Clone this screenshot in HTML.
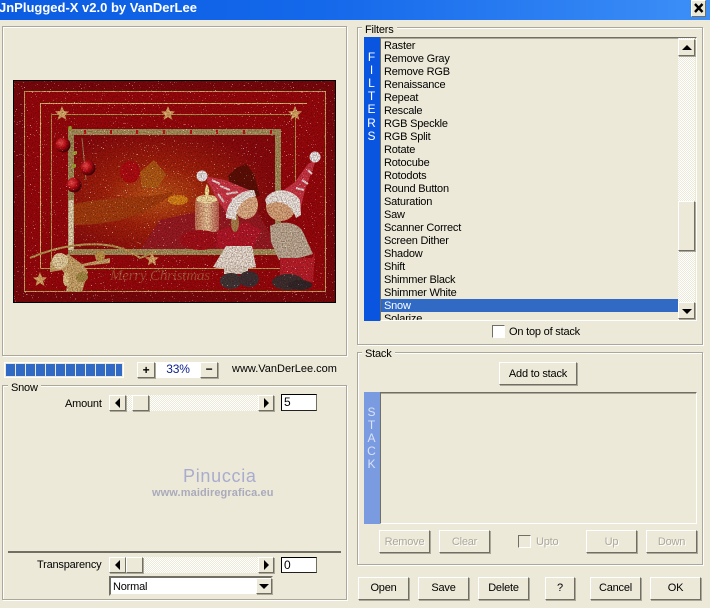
<!DOCTYPE html>
<html><head><meta charset="utf-8"><style>
html,body{margin:0;padding:0;background:#ece9d8;}
#w{position:relative;width:710px;height:608px;overflow:hidden;background:#ece9d8;font-family:"Liberation Sans",sans-serif;font-size:11px;color:#000;letter-spacing:-.2px;}
#w div,#w svg{position:absolute;box-sizing:border-box;}
.t{white-space:nowrap;line-height:13px;}
.box{border:1px solid #aca899;box-shadow:inset 1px 1px 0 #fff,1px 1px 0 #fff;}
.lg{background:#ece9d8;padding:0 3px;height:13px;line-height:13px;white-space:nowrap;}
.b{background:#ece9d8;border:1px solid;border-color:#fff #716f64 #716f64 #fff;box-shadow:1px 1px 0 #aca899;text-align:center;white-space:nowrap;}
.b.dis{color:#aca899;text-shadow:1px 1px 0 #fff;}
.dith{background:repeating-conic-gradient(#fff 0 25%,#ece9d8 0 50%) 0 0/2px 2px;}
.sunk{border:1px solid;border-color:#716f64 #fff #fff #716f64;}
.inp{background:#fff;border:1px solid;border-color:#000 #000 #000 #000;border-right-color:#716f64;border-bottom-color:#222;}
.tu{width:0;height:0;border-left:5px solid transparent;border-right:5px solid transparent;border-bottom:5px solid #000;}
.td{width:0;height:0;border-left:5px solid transparent;border-right:5px solid transparent;border-top:5px solid #000;}
.tl{width:0;height:0;border-top:5px solid transparent;border-bottom:5px solid transparent;border-right:5px solid #000;}
.tr{width:0;height:0;border-top:5px solid transparent;border-bottom:5px solid transparent;border-left:5px solid #000;}
.v{color:#fff;font-size:12px;width:15px;text-align:center;line-height:13px;letter-spacing:0;}
.p{width:9px;height:12px;top:364px;background:#316ac5;}
</style></head><body><div id="w">

<div style="left:0;top:0;width:710px;height:20px;background:linear-gradient(90deg,#0b5ce2 0%,#1468ea 45%,#3d8ff7 100%);"></div>
<div class="t" style="left:-1px;top:0;height:16px;line-height:16px;color:#fff;font-weight:bold;font-size:13px;letter-spacing:0;">JnPlugged-X v2.0 by VanDerLee</div>
<div class="b" style="left:691px;top:0;width:15px;height:17px;box-shadow:none;"></div>
<svg style="left:693px;top:2px" width="12" height="12" viewBox="0 0 12 12"><path d="M2 2L9.500 10M9.500 2L2 10" stroke="#000" stroke-width="2.4"/></svg>

<div class="box" style="left:2px;top:26px;width:345px;height:330px;"></div>

<svg style="left:13px;top:80px" width="323" height="223" viewBox="13 80 323 223">
<defs>
<filter id="snow" x="0" y="0" width="100%" height="100%" color-interpolation-filters="sRGB"><feTurbulence type="fractalNoise" baseFrequency="0.95" numOctaves="1" seed="7"/><feColorMatrix values="0 0 0 0 1 0 0 0 0 1 0 0 0 0 1 0 0 1 0 0"/><feComponentTransfer><feFuncA type="linear" slope="40" intercept="-29"/></feComponentTransfer></filter>
<filter id="gr" x="0" y="0" width="100%" height="100%" color-interpolation-filters="sRGB"><feTurbulence type="fractalNoise" baseFrequency="0.8" numOctaves="2" seed="3"/><feColorMatrix values="0 0 0 0 .2 0 0 0 0 0 0 0 0 0 0 0 0 0 1.8 -.6"/></filter>
<radialGradient id="glow" cx=".42" cy=".55" r=".55"><stop offset="0" stop-color="#c8601a"/><stop offset=".45" stop-color="#a8240c"/><stop offset="1" stop-color="#8c0a0e"/></radialGradient>
<linearGradient id="cand" x1="0" x2="1"><stop offset="0" stop-color="#c87a5a"/><stop offset=".5" stop-color="#f3d2a2"/><stop offset="1" stop-color="#c06050"/></linearGradient>
<radialGradient id="ball" cx=".35" cy=".35" r=".7"><stop offset="0" stop-color="#ff5a5a"/><stop offset=".5" stop-color="#c00c14"/><stop offset="1" stop-color="#300006"/></radialGradient>
</defs>
<rect x="13" y="80" width="323" height="223" fill="#9c080c"/>
<rect x="13" y="80" width="11" height="223" fill="#7c080c"/><rect x="326" y="80" width="10" height="223" fill="#7c080c"/>
<rect x="13" y="80" width="323" height="11" fill="#7c080c"/><rect x="13" y="292" width="323" height="11" fill="#7c080c"/>
<rect x="68" y="128" width="213" height="125" fill="url(#glow)"/>
<path d="M160 220L250 200L280 250H140Z" fill="#9c1c24"/>
<path d="M70 205C110 195 150 200 176 190C150 215 115 225 75 225Z" fill="#a8400f"/>
<path d="M140 172l14-12 12 14-8 14-16 0Z" fill="#b86a18" opacity=".8"/>
<ellipse cx="130" cy="172" rx="10" ry="11" fill="#b50c12"/>
<path d="M236 168l-8 8 6 24 26-4-6-22-8-10Z" fill="#5c1006"/>
<ellipse cx="178" cy="200" rx="10" ry="5" fill="#e08a18"/>
<rect x="24.500" y="91.500" width="301" height="200" fill="none" stroke="#cdb06a"/>
<path d="M40.500 268.500V103.500H307" fill="none" stroke="#e0c878"/>
<path d="M40.500 268.500H283" fill="none" stroke="#c4b060"/>
<path d="M51.500 114.500H295.500V192M51.500 114.500V270" fill="none" stroke="#b8a050"/>
<path d="M71 132H278V252H71Z" fill="none" stroke="#a89a60" stroke-width="6"/>
<path d="M71 200V250" stroke="#ece0bc" stroke-width="5"/>
<path d="M84 132h2M110 132h2M136 132h2M163 132h2M190 132h2M216 132h2M243 132h2M270 132h2" stroke="#c81418" stroke-width="4"/>
<path d="M30 258C60 245 110 235 140 258L155 252" stroke="#c0a458" stroke-width="2" fill="none"/>
<g fill="#e0b46c"><path d="M62 106l2 5 5 .5-4 3.500 1.500 5-4.500-3-4.500 3 1.500-5-4-3.500 5-.5Z"/><path d="M168 106l2 5 5 .5-4 3.500 1.500 5-4.500-3-4.500 3 1.500-5-4-3.500 5-.5Z"/><path d="M295 106l2 5 5 .5-4 3.500 1.500 5-4.500-3-4.500 3 1.500-5-4-3.500 5-.5Z"/><path d="M40 272l2 5 5 .5-4 3.500 1.500 5-4.500-3-4.500 3 1.500-5-4-3.500 5-.5Z"/><path d="M152 252l2 5 5 .5-4 3 1 5-4-3-4 3 1-5-4-3 5-.5Z"/></g>
<path d="M50 262l18-8 14 10 28-6 0 5-26 3 4 6-6 20-16 0 2-14-6-8-12 2Z" fill="#d0b070"/>
<circle cx="60" cy="261" r="8" fill="#ecdca8"/>
<ellipse cx="82" cy="277" rx="6" ry="5" fill="#a89448"/>
<ellipse cx="66" cy="279" rx="3" ry="7" fill="#e8d090"/>
<circle cx="100" cy="256" r="5" fill="#c4a050"/>
<path d="M72 130V200M82 138L86 180" stroke="#a88e5a" fill="none"/>
<circle cx="63" cy="145" r="7.500" fill="url(#ball)"/><circle cx="88" cy="168" r="7.500" fill="url(#ball)"/><circle cx="74" cy="185" r="7.500" fill="url(#ball)"/>
<circle cx="70" cy="128" r="2" fill="#a0b030"/><circle cx="75" cy="153" r="2" fill="#a0b030"/><circle cx="74" cy="166" r="2" fill="#a0b030"/>
<text x="110" y="280" font-family="Liberation Serif,serif" font-style="italic" font-size="15" fill="#b89c58" opacity=".55">Merry Christmas</text>

<rect x="195" y="198" width="24" height="34" rx="4" fill="url(#cand)"/>
<ellipse cx="207" cy="199" rx="11" ry="4" fill="#fbe9a8"/>
<path d="M207 184c3 6 3 10 0 14c-3-4-3-8 0-14Z" fill="#fff2a0"/>
<ellipse cx="200" cy="240" rx="20" ry="10" fill="#a8101a"/>

<path d="M217 231l30-9 14 8-8 19-36 0Z" fill="#b8182a"/>
<ellipse cx="235" cy="223" rx="4" ry="9" fill="#b08a50"/>
<path d="M226 246h26l4 21c-14 3-30 3-43 0Z" fill="#f0eadc"/>
<rect x="224" y="266" width="24" height="8" fill="#e6dece"/>
<ellipse cx="231" cy="281" rx="11" ry="8" fill="#3e3a3a"/><ellipse cx="249" cy="279" rx="10" ry="8" fill="#3a3438"/>
<ellipse cx="246" cy="205" rx="12" ry="14" fill="#e7b98c"/>
<path d="M205 176L225 180 254 192 227 214 215 196Z" fill="#d43a4a"/>
<path d="M212 180l8 4M220 186l10 4M226 194l12-2M218 194l6 8M232 198l6 6" stroke="#f4e8e4" stroke-width="2" fill="none"/>
<path d="M226 218C226 202 238 190 254 190L256 196C244 198 236 206 236 220Z" fill="#f6f3ec"/>
<circle cx="202" cy="176" r="5.500" fill="#f4f4f4"/>

<ellipse cx="281" cy="206" rx="15" ry="15" fill="#dfae80"/>
<path d="M316 160L308 164 295 182 281 192 300 211 305 190Z" fill="#d43a4a"/>
<path d="M308 170l4 4M302 180l6 4M296 188l8 2M290 194l8 6" stroke="#f4e8e4" stroke-width="2" fill="none"/>
<path d="M265 200C270 188 290 186 300 200L301 215L296 218C292 204 278 198 267 205Z" fill="#f6f3ec"/>
<circle cx="315" cy="157" r="5.500" fill="#f4f4f4"/>
<path d="M270 226c12-6 28-4 33 6l10 22-14 4-2 2h-18l-8-18Z" fill="#c4b69e"/>
<path d="M280 258h32l3-6-2 30-24 0-9-6Z" fill="#c0202c"/>
<ellipse cx="288" cy="282" rx="16" ry="8" fill="#3a3232"/><ellipse cx="300" cy="285" rx="12" ry="5" fill="#2e2a2c"/>

<rect x="13" y="80" width="323" height="223" filter="url(#gr)" opacity=".55"/>
<rect x="13" y="80" width="323" height="223" filter="url(#snow)"/>
<rect x="13.500" y="80.500" width="322" height="222" fill="none" stroke="#000"/>
</svg>

<div style="left:4px;top:362px;width:120px;height:16px;background:#fff;"></div>
<div style="left:5px;top:363px;width:118px;height:14px;background:#ece9d8;"></div>
<div class="p" style="left:6px"></div><div class="p" style="left:16px"></div><div class="p" style="left:26px"></div><div class="p" style="left:36px"></div><div class="p" style="left:46px"></div><div class="p" style="left:56px"></div><div class="p" style="left:66px"></div><div class="p" style="left:76px"></div><div class="p" style="left:86px"></div><div class="p" style="left:96px"></div><div class="p" style="left:106px"></div><div class="p" style="left:116px;width:6px"></div>

<div style="left:155px;top:362px;width:46px;height:16px;background:#fff;"></div>
<div class="b" style="left:137px;top:362px;width:18px;height:16px;font-weight:bold;font-size:12px;line-height:14px;">+</div>
<div class="b" style="left:200px;top:362px;width:18px;height:16px;font-weight:bold;font-size:12px;line-height:13px;">−</div>
<div class="t" style="left:155px;width:46px;text-align:center;top:363px;color:#0a1f8a;font-size:12px;letter-spacing:-.2px;">33%</div>
<div class="t" style="left:232px;top:363px;font-size:11px;letter-spacing:0;">www.VanDerLee.com</div>

<div class="box" style="left:2px;top:385px;width:345px;height:215px;"></div>
<div class="lg" style="left:8px;top:382px;">Snow</div>
<div class="t" style="left:65px;top:398px;">Amount</div>
<div class="dith" style="left:126px;top:395px;width:132px;height:16px;"></div>
<div class="b" style="left:109px;top:395px;width:17px;height:16px;"><div class="tl" style="left:5px;top:2px;"></div></div>
<div class="b" style="left:132px;top:395px;width:17px;height:16px;"></div>
<div class="b" style="left:258px;top:395px;width:16px;height:16px;"><div class="tr" style="left:5px;top:2px;"></div></div>
<div class="inp t" style="left:281px;top:394px;width:36px;height:17px;padding-left:2px;font-size:12px;line-height:15px;">5</div>

<div class="t" style="left:183px;top:466px;height:20px;line-height:20px;font-size:18px;color:#a9acce;letter-spacing:.7px;">Pinuccia</div>
<div class="t" style="left:152px;top:487px;font-size:11px;font-weight:bold;color:#aaaabb;letter-spacing:.1px;">www.maidiregrafica.eu</div>

<div style="left:8px;top:551px;width:333px;height:2px;background:#716f64;"></div>
<div class="t" style="left:37px;top:559px;">Transparency</div>
<div class="dith" style="left:126px;top:557px;width:132px;height:16px;"></div>
<div class="b" style="left:109px;top:557px;width:17px;height:16px;"><div class="tl" style="left:5px;top:2px;"></div></div>
<div class="b" style="left:126px;top:557px;width:17px;height:16px;"></div>
<div class="b" style="left:258px;top:557px;width:16px;height:16px;"><div class="tr" style="left:5px;top:2px;"></div></div>
<div class="inp t" style="left:281px;top:557px;width:36px;height:16px;padding-left:2px;font-size:12px;line-height:14px;">0</div>
<div style="left:109px;top:576px;width:164px;height:20px;background:#fff;border:2px solid;border-color:#716f64 #ece9d8 #ece9d8 #716f64;"></div>
<div class="t" style="left:113px;top:581px;">Normal</div>
<div class="b" style="left:256px;top:578px;width:16px;height:16px;"><div class="td" style="left:2px;top:5px;"></div></div>

<div class="box" style="left:357px;top:27px;width:346px;height:318px;"></div>
<div class="lg" style="left:362px;top:24px;">Filters</div>
<div style="left:364px;top:37px;width:16px;height:284px;background:#0a55e0;"></div>
<div class="v" style="left:364px;top:51px;">F</div><div class="v" style="left:364px;top:64px;">I</div><div class="v" style="left:364px;top:77px;">L</div><div class="v" style="left:364px;top:90px;">T</div><div class="v" style="left:364px;top:103px;">E</div><div class="v" style="left:364px;top:117px;">R</div><div class="v" style="left:364px;top:130px;">S</div>

<div style="left:380px;top:37px;width:317px;height:284px;overflow:hidden;border:1px solid;border-color:#716f64 #fff #fff #716f64;box-shadow:inset 0 1px 0 #aca899;">
<div style="left:0;top:261px;width:297px;height:13px;background:#316ac5;"></div>
<div class="t" style="left:3px;top:2px;">Raster<br>Remove Gray<br>Remove RGB<br>Renaissance<br>Repeat<br>Rescale<br>RGB Speckle<br>RGB Split<br>Rotate<br>Rotocube<br>Rotodots<br>Round Button<br>Saturation<br>Saw<br>Scanner Correct<br>Screen Dither<br>Shadow<br>Shift<br>Shimmer Black<br>Shimmer White<br><span style="color:#fff">Snow</span><br>Solarize</div>
<div class="dith" style="left:297px;top:0;width:17px;height:282px;"></div>
<div class="b" style="left:297px;top:1px;width:17px;height:17px;"><div class="tu" style="left:3px;top:5px;"></div></div>
<div class="b" style="left:297px;top:163px;width:17px;height:50px;"></div>
<div class="b" style="left:297px;top:264px;width:17px;height:17px;"><div class="td" style="left:3px;top:6px;"></div></div>
</div>

<div class="sunk" style="left:492px;top:325px;width:13px;height:13px;background:#fff;"></div>
<div class="t" style="left:509px;top:326px;">On top of stack</div>

<div class="box" style="left:357px;top:352px;width:346px;height:213px;"></div>
<div class="lg" style="left:362px;top:348px;">Stack</div>
<div class="b" style="left:499px;top:362px;width:78px;height:23px;line-height:22px;">Add to stack</div>
<div style="left:364px;top:392px;width:16px;height:132px;background:#7b9be0;"></div>
<div class="v" style="left:364px;top:406px;color:#d8e2f8;">S</div><div class="v" style="left:364px;top:419px;color:#d8e2f8;">T</div><div class="v" style="left:364px;top:432px;color:#d8e2f8;">A</div><div class="v" style="left:364px;top:445px;color:#d8e2f8;">C</div><div class="v" style="left:364px;top:458px;color:#d8e2f8;">K</div>
<div class="sunk" style="left:380px;top:392px;width:317px;height:132px;box-shadow:inset 0 1px 0 #aca899;"></div>

<div class="b dis" style="left:379px;top:530px;width:51px;height:23px;line-height:22px;">Remove</div>
<div class="b dis" style="left:439px;top:530px;width:51px;height:23px;line-height:22px;">Clear</div>
<div class="sunk" style="left:518px;top:535px;width:13px;height:13px;"></div>
<div class="t" style="left:536px;top:536px;color:#aca899;text-shadow:1px 1px 0 #fff;">Upto</div>
<div class="b dis" style="left:586px;top:530px;width:51px;height:23px;line-height:22px;">Up</div>
<div class="b dis" style="left:646px;top:530px;width:51px;height:23px;line-height:22px;">Down</div>

<div class="b" style="left:358px;top:577px;width:51px;height:23px;line-height:21px;">Open</div>
<div class="b" style="left:418px;top:577px;width:51px;height:23px;line-height:21px;">Save</div>
<div class="b" style="left:478px;top:577px;width:51px;height:23px;line-height:21px;">Delete</div>
<div class="b" style="left:545px;top:577px;width:30px;height:23px;line-height:21px;">?</div>
<div class="b" style="left:590px;top:577px;width:51px;height:23px;line-height:21px;">Cancel</div>
<div class="b" style="left:650px;top:577px;width:51px;height:23px;line-height:21px;">OK</div>
</div></body></html>
